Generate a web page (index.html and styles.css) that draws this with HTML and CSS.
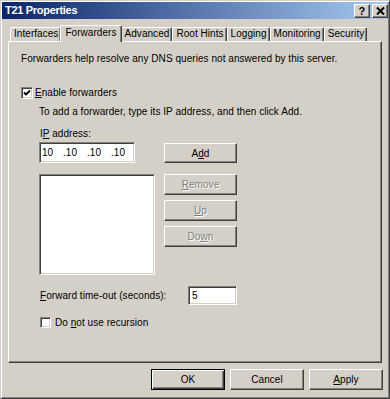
FILE: index.html
```html
<!DOCTYPE html>
<html>
<head>
<meta charset="utf-8">
<link rel="stylesheet" href="styles.css">
</head>
<body>
<div class="window">
  <div class="titlebar">
    <span class="title">T21 Properties</span>
    <div class="tbtns">
      <span class="tbtn">?</span>
      <span class="tbtn"><svg width="9" height="8" viewBox="0 0 9 8"><path d="M1 0.5 L8 7.5 M8 0.5 L1 7.5" stroke="#000" stroke-width="2" fill="none"/></svg></span>
    </div>
  </div>
  <div class="tabs">
    <div class="tab">Interfaces</div>
    <div class="tab sel">Forwarders</div>
    <div class="tab">Advanced</div>
    <div class="tab">Root Hints</div>
    <div class="tab">Logging</div>
    <div class="tab">Monitoring</div>
    <div class="tab">Security</div>
  </div>
  <div class="panel">
    <p class="desc">Forwarders help resolve any DNS queries not answered by this server.</p>
    <div class="chk-row first">
      <span class="chk"><svg width="8" height="8" viewBox="0 0 8 8"><path d="M1 3.5 L3 5.5 L7 1.5" stroke="#000" stroke-width="1.8" fill="none"/></svg></span>
      <span><u>E</u>nable forwarders</span>
    </div>
    <div class="indent">
      <p class="hint">To add a forwarder, type its IP address, and then click Add.</p>
      <p class="iplabel">I<u>P</u> address:</p>
      <div class="row iprow">
        <div class="field ip"><span class="seg">10</span><span class="seg">.10</span><span class="seg">.10</span><span class="seg">.10</span></div>
        <div class="btn">A<u>d</u>d</div>
      </div>
      <div class="row listrow">
        <div class="field list"></div>
        <div class="btncol">
          <div class="btn dis"><u>R</u>emove</div>
          <div class="btn dis"><u>U</u>p</div>
          <div class="btn dis">Do<u>w</u>n</div>
        </div>
      </div>
      <div class="row torow">
        <span class="tolabel"><u>F</u>orward time-out (seconds):</span>
        <div class="field to">5</div>
      </div>
      <div class="chk-row rec">
        <span class="chk small"></span>
        <span>Do <u>n</u>ot use recursion</span>
      </div>
    </div>
  </div>
  <div class="footer">
    <div class="btn fbtn def">OK</div>
    <div class="btn fbtn">Cancel</div>
    <div class="btn fbtn"><u>A</u>pply</div>
  </div>
</div>
</body>
</html>
```

FILE: styles.css
```css
* { box-sizing: border-box; }
html, body { margin: 0; padding: 0; background: #d4d0c8; }
body {
  font-family: "Liberation Sans", Arial, sans-serif;
  font-size: 10px;
  line-height: 13px;
  color: #000;
  letter-spacing: 0.05px;
}
p { margin: 0; }
u { text-decoration: underline; text-underline-offset: 1px; }

.window {
  width: 390px;
  height: 399px;
  background: #d4d0c8;
  border: 1px solid;
  border-color: #d4d0c8 #404040 #404040 #d4d0c8;
  box-shadow: inset 1px 1px #fff, inset -1px -1px #808080;
  padding: 1px;
}

.titlebar {
  height: 17px;
  background: linear-gradient(to right, #0a246a, #a6caf0);
  display: flex;
  align-items: center;
  justify-content: space-between;
  padding-left: 3px;
}
.title {
  color: #fff;
  font-weight: bold;
  font-size: 11px;
  letter-spacing: -0.3px;
}
.tbtns { display: flex; gap: 2px; }
.tbtn {
  width: 16px;
  height: 14px;
  background: #d4d0c8;
  border: 1px solid;
  border-color: #fff #404040 #404040 #fff;
  box-shadow: inset -1px -1px #808080;
  display: flex;
  align-items: center;
  justify-content: center;
  font-weight: bold;
  font-size: 11px;
  line-height: 12px;
}

.tabs {
  display: flex;
  align-items: flex-end;
  height: 22px;
  padding-left: 8px;
  padding-top: 6px;
}
.tab {
  height: 14px;
  padding: 0 2px 0 3px;
  border: 1px solid;
  border-bottom: 0;
  border-color: #fff #404040 transparent #fff;
  box-shadow: inset -1px 0 #808080;
  border-radius: 2px 2px 0 0;
  line-height: 12px;
  white-space: nowrap;
}
.tab.sel {
  height: 17px;
  margin: 0 -1px -1px -1px;
  padding: 1px 4px 0 4px;
  position: relative;
  z-index: 1;
  background: #d4d0c8;
}

.panel {
  margin-left: 6px;
  width: 374px;
  height: 322px;
  border: 1px solid;
  border-color: #fff #404040 #404040 #fff;
  box-shadow: inset -1px -1px #808080;
  padding: 10px 0 0 12px;
}

.chk-row {
  display: flex;
  align-items: center;
  gap: 2px;
  height: 13px;
}
.chk-row.first { margin-top: 21px; }
.chk {
  width: 12px;
  height: 12px;
  background: #fff;
  border: 1px solid;
  border-color: #808080 #fff #fff #808080;
  box-shadow: inset 1px 1px #404040, inset -1px -1px #d4d0c8;
  display: flex;
  align-items: center;
  justify-content: center;
}
.chk.small { width: 11px; height: 11px; margin-right: 2px; }

.indent { padding-left: 18px; }
.hint { margin-top: 6px; }
.iplabel { margin-top: 9px; padding-left: 1px; }

.row { display: flex; }
.iprow { margin-top: 2px; align-items: flex-start; }
.field {
  background: #fff;
  border: 1px solid;
  border-color: #808080 #fff #fff #808080;
  box-shadow: inset 1px 1px #404040, inset -1px -1px #d4d0c8;
}
.ip {
  width: 96px;
  height: 21px;
  margin-right: 29px;
  display: flex;
  align-items: center;
  padding-left: 2px;
}
.seg { width: 24px; }
.seg:first-child { width: 21px; }
.seg:last-child { width: auto; }

.btn {
  width: 73px;
  height: 20px;
  margin-top: 1px;
  background: #d4d0c8;
  border: 1px solid;
  border-color: #fff #404040 #404040 #fff;
  box-shadow: inset -1px -1px #808080;
  display: flex;
  align-items: center;
  justify-content: center;
}
.btn.dis {
  color: #808080;
  text-shadow: 1px 1px #fff;
  height: 21px;
  margin-top: 0;
}

.listrow { margin-top: 11px; }
.list {
  width: 116px;
  height: 101px;
  margin-right: 9px;
}
.btncol { display: flex; flex-direction: column; gap: 5px; }

.torow { margin-top: 11px; align-items: center; }
.tolabel { width: 149px; padding-left: 1px; }
.to {
  width: 49px;
  height: 19px;
  padding-left: 3px;
  line-height: 17px;
}

.chk-row.rec { margin-top: 11px; padding-left: 1px; }

.footer {
  display: flex;
  justify-content: flex-end;
  gap: 5px;
  padding-right: 5px;
  margin-top: 6px;
}
.fbtn {
  width: 74px;
  height: 21px;
  margin-top: 0;
}
.fbtn.def {
  border: 1px solid #000;
  box-shadow: inset 1px 1px #fff, inset -1px -1px #404040, inset -2px -2px #808080;
}
```
